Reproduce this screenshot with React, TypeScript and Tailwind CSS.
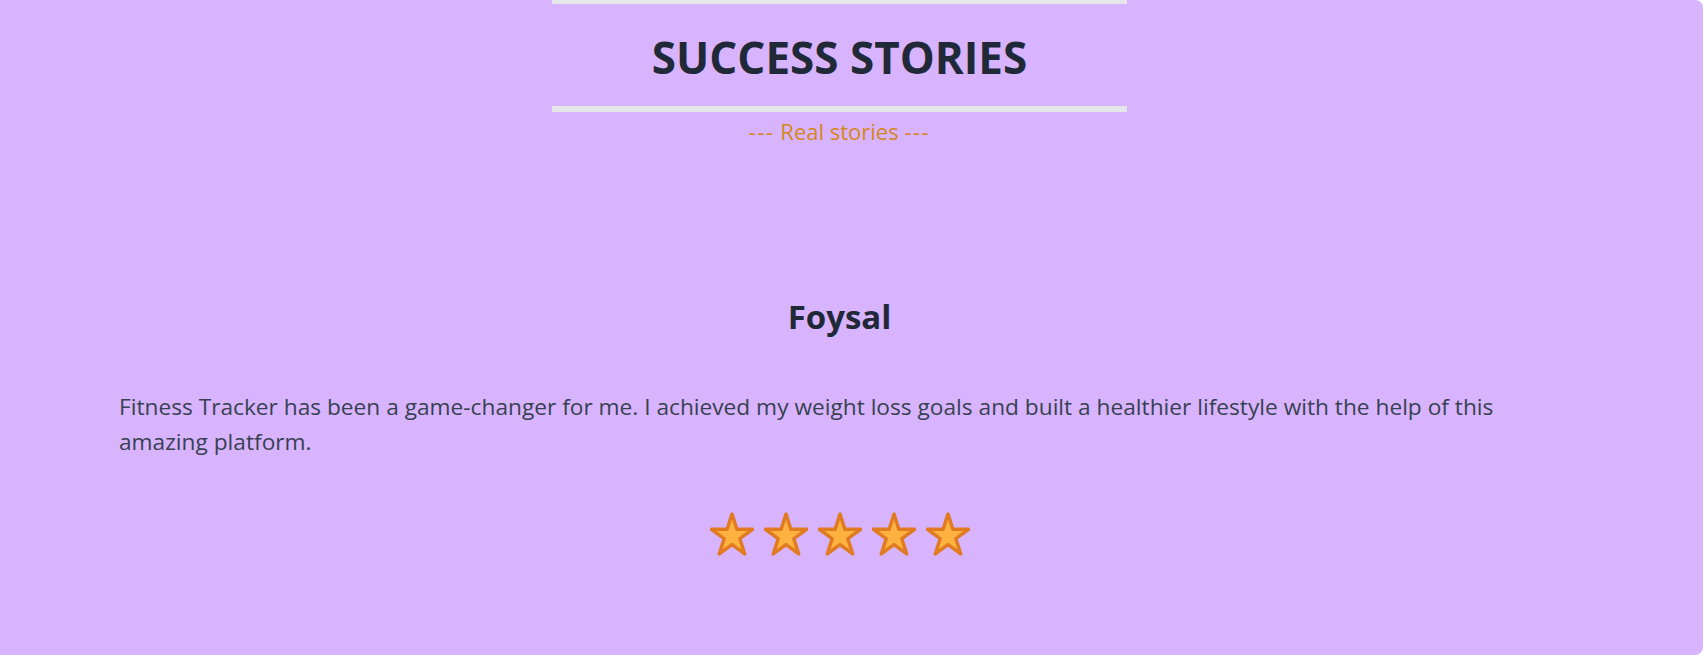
import React from "react";

const Star = () => (
  <svg width="44" height="44" viewBox="0 0 64 64" className="block">
    <path
      d="M62 25.154H39.082L32 3l-7.082 22.154H2l18.541 13.693L13.459 61 32 47.309 50.541 61l-7.082-22.154L62 25.154z"
      fill="#ffb23f"
      stroke="#e17b21"
      strokeWidth="5"
      strokeLinejoin="round"
    />
  </svg>
);

export default function App() {
  return (
    <div className="w-[1705px] h-[655px] bg-white overflow-hidden" style={{ fontFamily: '"Open Sans", "Noto Sans", sans-serif' }}>
      <div className="w-[1703px] h-[655px] bg-[#d8b4fe] rounded-r-lg">
        <div className="w-[1679px] flex flex-col items-center text-center">
          <div className="w-[575px] border-t-4 border-b-[6px] border-[#e5e7eb] pt-[31px] pb-[27px]">
            <h2 className="text-[44px] leading-none font-bold text-[#1f2937]">SUCCESS STORIES</h2>
          </div>
          <p className="mt-[5px] text-[22px] leading-[28px] text-[#d4871a]">
            <span className="tracking-[1.5px]">---</span> Real stories <span className="tracking-[1.5px]">---</span>
          </p>
          <h3 className="mt-[155px] text-[33px] leading-none font-bold text-[#1f2937]">Foysal</h3>
          <p className="mt-[56px] w-full px-[119px] text-left text-[22.7px] leading-[35px] text-[#374151]">
            Fitness Tracker has been a game-changer for me. I achieved my weight loss goals and built a healthier lifestyle with the help of this amazing platform.
          </p>
          <div className="mt-[53px] flex gap-[10px]">
            <Star />
            <Star />
            <Star />
            <Star />
            <Star />
          </div>
        </div>
      </div>
    </div>
  );
}
